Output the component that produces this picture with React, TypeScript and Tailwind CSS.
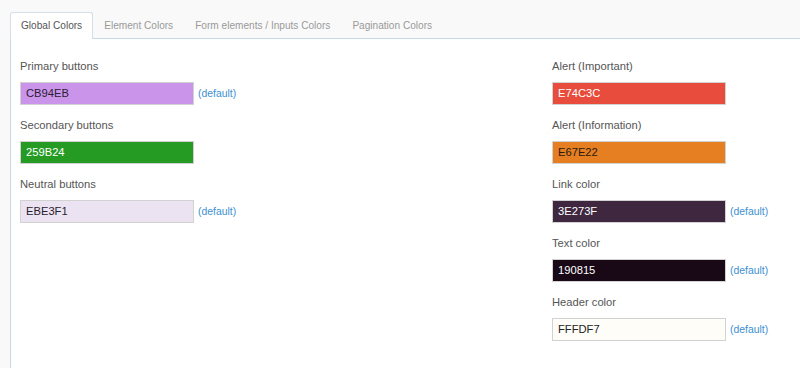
const tabs = ["Global Colors", "Element Colors", "Form elements / Inputs Colors", "Pagination Colors"];

type Field = { label: string; value: string; bg: string; text: string; isDefault: boolean };

const left: Field[] = [
  { label: "Primary buttons",   value: "CB94EB", bg: "bg-[#cb94eb]", text: "text-[#2a2030]", isDefault: true },
  { label: "Secondary buttons", value: "259B24", bg: "bg-[#259b24]", text: "text-white",     isDefault: false },
  { label: "Neutral buttons",   value: "EBE3F1", bg: "bg-[#ebe3f1]", text: "text-[#2a2030]", isDefault: true },
];

const right: Field[] = [
  { label: "Alert (Important)",   value: "E74C3C", bg: "bg-[#e74c3c]", text: "text-white",     isDefault: false },
  { label: "Alert (Information)", value: "E67E22", bg: "bg-[#e67e22]", text: "text-[#2a1a10]", isDefault: false },
  { label: "Link color",          value: "3E273F", bg: "bg-[#3e273f]", text: "text-white",     isDefault: true },
  { label: "Text color",          value: "190815", bg: "bg-[#190815]", text: "text-white",     isDefault: true },
  { label: "Header color",        value: "FFFDF7", bg: "bg-[#fffdf7]", text: "text-[#222]",    isDefault: true },
];

function ColorField({ f }: { f: Field }) {
  return (
    <div className="mb-[12px]">
      <p className="h-[16px] leading-[16px] text-[11.2px] text-[#555] mb-[8px]">{f.label}</p>
      <div className="flex items-center">
        <div className={`w-[174px] h-[23px] border border-[#d2d2d2] pl-[5px] flex items-center text-[11.2px] ${f.bg} ${f.text}`}>
          {f.value}
        </div>
        {f.isDefault && (
          <a className="ml-[4px] text-[10.4px] text-[#3d8fd1] cursor-pointer">(default)</a>
        )}
      </div>
    </div>
  );
}

export default function App() {
  return (
    <div className="h-[368px] overflow-hidden bg-[#f9f9f9] pl-[10px] pt-[12px] flex flex-col font-['Liberation_Sans',Arial,sans-serif]">
      {/* Tabs */}
      <div className="flex border-b border-[#c9d8e7] h-[27px] shrink-0">
        {tabs.map((t, i) => (
          <div key={t}
            className={`-mb-px h-[27px] px-[10px] flex items-center text-[10.1px] border border-b-0 rounded-t-[3px] ${
              i === 0 ? "bg-white border-[#d6dfe8] text-[#555]" : "border-transparent text-[#999]"
            }`}
          >
            {t}
          </div>
        ))}
      </div>

      {/* Panel */}
      <div className="flex-1 bg-white border-l border-[#c9d8e7] pl-[9px] pt-[19px] flex">
        <div className="w-[532px] shrink-0">
          {left.map((f) => <ColorField key={f.label} f={f} />)}
        </div>
        <div>
          {right.map((f) => <ColorField key={f.label} f={f} />)}
        </div>
      </div>
    </div>
  );
}
